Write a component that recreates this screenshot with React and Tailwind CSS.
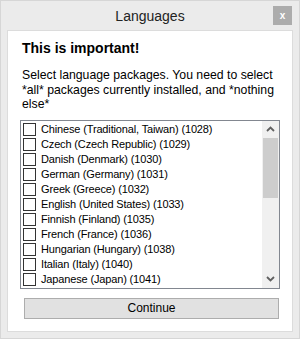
import React from 'react';

const languages = [
  'Chinese (Traditional, Taiwan) (1028)',
  'Czech (Czech Republic) (1029)',
  'Danish (Denmark) (1030)',
  'German (Germany) (1031)',
  'Greek (Greece) (1032)',
  'English (United States) (1033)',
  'Finnish (Finland) (1035)',
  'French (France) (1036)',
  'Hungarian (Hungary) (1038)',
  'Italian (Italy) (1040)',
  'Japanese (Japan) (1041)',
];

function Chevron({ up }) {
  return (
    <svg width="9" height="6" viewBox="0 0 9 6">
      <path
        d={up ? 'M1 5 L4.5 1.5 L8 5' : 'M1 1 L4.5 4.5 L8 1'}
        fill="none"
        stroke="#606060"
        strokeWidth="1.8"
      />
    </svg>
  );
}

export default function App() {
  return (
    <div className="w-[300px] h-[339px] bg-[#ebebeb] border border-[#d6d6d6] flex flex-col font-['Liberation_Sans',Arial,sans-serif] text-black">
      {/* Title bar */}
      <div className="relative h-[29px] flex items-center justify-center">
        <span className="text-[14px] leading-[16px] text-[#222] mt-[1px]">Languages</span>
        <div className="absolute right-[7px] top-[5px] w-[19px] h-[19px] bg-[#acacac] flex items-center justify-center text-white text-[10px] font-bold leading-none">
          x
        </div>
      </div>

      {/* Panel */}
      <div className="ml-[6px] w-[286px] h-[302px] bg-white border border-[#dcdcdc] px-[12px] pt-[9px] flex flex-col">
        <div className="ml-[2px] text-[14px] leading-[16px] font-bold">This is important!</div>
        <p className="ml-[2px] mt-[12px] w-[258px] text-[12.25px] leading-[14.5px]">
          Select language packages. You need to select *all* packages currently installed, and *nothing else*
        </p>

        {/* List */}
        <div className="mt-[8px] w-[260px] h-[169px] border border-[#828790] flex overflow-hidden">
          <div className="flex-1 flex flex-col">
            {languages.map((name) => (
              <div key={name} className="h-[15px] flex items-start shrink-0">
                <div className="ml-[2px] mt-[2px] w-[13px] h-[13px] border border-[#333] bg-white shrink-0" />
                <span className="ml-[5px] mt-[1px] text-[11px] leading-[15px] tracking-[-0.15px] whitespace-nowrap">
                  {name}
                </span>
              </div>
            ))}
          </div>
          {/* Scrollbar */}
          <div className="w-[17px] bg-[#f0f0f0] flex flex-col">
            <div className="h-[17px] flex items-center justify-center">
              <Chevron up />
            </div>
            <div className="mx-[1px] h-[60px] bg-[#cdcdcd]" />
            <div className="flex-1" />
            <div className="h-[17px] flex items-center justify-center">
              <Chevron />
            </div>
          </div>
        </div>

        {/* Button */}
        <button className="ml-[4px] mt-[9px] w-[255px] h-[21px] bg-[#e1e1e1] border border-[#adadad] text-[12px] leading-none flex items-center justify-center">
          Continue
        </button>
      </div>
    </div>
  );
}
